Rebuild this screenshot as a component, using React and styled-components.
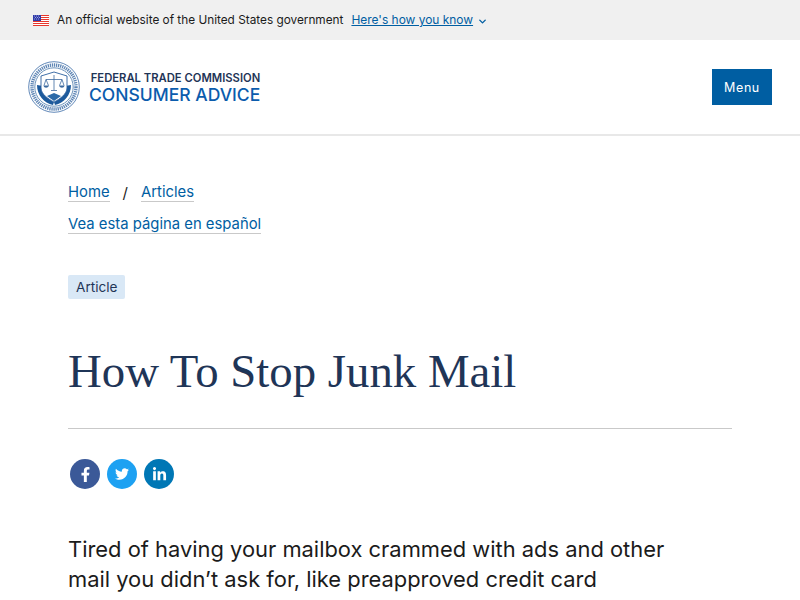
import styled, { createGlobalStyle } from "styled-components";
import { FaFacebookF, FaTwitter, FaLinkedinIn } from "react-icons/fa";
import { FiChevronDown } from "react-icons/fi";

const GlobalStyle = createGlobalStyle`
  html, body {
    margin: 0;
    height: 600px;
    overflow: hidden;
    background: #fff;
    font-family: Inter, "Liberation Sans", sans-serif;
    color: #1b1b1b;
  }
  * { box-sizing: border-box; }
`;

function Flag() {
  const stripes = [0, 2, 4, 6, 8, 10];
  return (
    <svg width="16" height="11" viewBox="0 0 16 11">
      <rect width="16" height="11" fill="#fff" />
      {stripes.map(y => <rect key={y} y={y} width="16" height="1" fill="#e8372c" />)}
      <rect width="8" height="6" fill="#2f3aa8" />
      <path d="M1 1h1M3 1h1M5 1h1M2 2.500h1M4 2.500h1M6 2.500h1M1 4h1M3 4h1M5 4h1" stroke="#c9cff0" strokeWidth="0.7" />
    </svg>
  );
}

function Seal() {
  return (
    <svg width="52" height="52" viewBox="0 0 52 52">
      <circle cx="26" cy="26" r="25.300" fill="#fff" stroke="#4f7bb0" strokeWidth="0.9" />
      <circle cx="26" cy="26" r="22" fill="none" stroke="#5f86b5" strokeWidth="3.400" strokeDasharray="1.300 0.800" />
      <circle cx="26" cy="26" r="19.200" fill="#fff" stroke="#2f659f" strokeWidth="0.7" />
      <path d="M9 24 C9 34 16 42 25 44 L26 41 C20 38 16 33 15 25 Z" fill="#1d5a9c" />
      <path d="M43 24 C43 34 36 42 27 44 L26 41 C32 38 36 33 37 25 Z" fill="#1d5a9c" />
      <path d="M13 15 L26 11 L39 15 V27 C39 33 32 38 26 41 C20 38 13 33 13 27 Z" fill="#fff" stroke="#2a5f9e" strokeWidth="0.9" />
      <path d="M19 35 L26 40 L33 35 L26 32 Z" fill="#2c6aa8" />
      <path d="M26 14 V29 M23 29.500 H29 M18 18.500 H34 M18 18.500 L16 24.500 M18 18.500 L20.500 24.500 M34 18.500 L31.500 24.500 M34 18.500 L36 24.500" stroke="#3d6a9f" strokeWidth="0.8" fill="none" />
      <path d="M15.500 24.500 C16 27.500 20 27.500 21 24.500 Z M31 24.500 C32 27.500 36 27.500 36.500 24.500 Z" fill="#3d6a9f" />
    </svg>
  );
}

export default function App() {
  return (
    <>
      <GlobalStyle />
      <GovBanner>
        <Flag />
        <GovText>An official website of the United States government</GovText>
        <GovLink>Here's how you know</GovLink>
        <FiChevronDown size={11} color="#005ea2" strokeWidth={3} />
      </GovBanner>

      <SiteHeader>
        <Brand>
          <Seal />
          <BrandText>
            <Agency>FEDERAL TRADE COMMISSION</Agency>
            <SiteName>CONSUMER ADVICE</SiteName>
          </BrandText>
        </Brand>
        <MenuButton>Menu</MenuButton>
      </SiteHeader>

      <Main>
        <Crumbs>
          <TextLink>Home</TextLink>
          <Slash>/</Slash>
          <TextLink>Articles</TextLink>
        </Crumbs>
        <LangRow>
          <TextLink>Vea esta página en español</TextLink>
        </LangRow>
        <Tag>Article</Tag>
        <Title>How To Stop Junk Mail</Title>
        <Rule />
        <Share>
          <ShareIcon $bg="#3b5998"><FaFacebookF size={15} /></ShareIcon>
          <ShareIcon $bg="#1da1f2"><FaTwitter size={14} /></ShareIcon>
          <ShareIcon $bg="#0077b5"><FaLinkedinIn size={15} /></ShareIcon>
        </Share>
        <Lead>
          Tired of having your mailbox crammed with ads and other mail you didn’t ask for, like preapproved credit card
        </Lead>
      </Main>
    </>
  );
}

const GovBanner = styled.div`
  height: 40px;
  background: #f0f0f0;
  display: flex;
  align-items: center;
  padding-left: 33px;
  font-size: 11.800px;
  line-height: 16px;
  svg:last-child { margin-left: 4px; margin-top: 2px; }
`;
const GovText = styled.span`
  margin-left: 8px;
  color: #1b1b1b;
`;
const GovLink = styled.a`
  margin-left: 8px;
  font-size: 11.950px;
  color: #005ea2;
  text-decoration: underline;
`;
const SiteHeader = styled.header`
  height: 96px;
  display: flex;
  align-items: center;
  justify-content: space-between;
  padding: 0 28px;
  border-bottom: 2px solid #e8e8e8;
`;
const Brand = styled.div`
  display: flex;
  align-items: center;
  gap: 9px;
`;
const BrandText = styled.div`
  display: flex;
  flex-direction: column;
  align-items: flex-end;
  padding-top: 1px;
`;
const Agency = styled.div`
  font-size: 11.250px;
  line-height: 14px;
  font-weight: 600;
  color: #1f3557;
  white-space: nowrap;
`;
const SiteName = styled.div`
  font-size: 17.500px;
  line-height: 20px;
  font-weight: 500;
  color: #0b5cad;
  white-space: nowrap;
`;
const MenuButton = styled.button`
  width: 60px;
  height: 36px;
  border: none;
  background: #005ea2;
  color: #fff;
  font: 400 12.500px Inter, sans-serif;
  letter-spacing: 0.6px;
`;
const Main = styled.main`
  padding: 44px 68px 0;
`;
const Crumbs = styled.div`
  display: flex;
  align-items: center;
  height: 24px;
`;
const TextLink = styled.a`
  color: #005ea2;
  font-size: 14.850px;
  line-height: 18px;
  border-bottom: 1px solid #c9c9c9;
  white-space: nowrap;
`;
const Slash = styled.span`
  margin: 0 13px;
  font-size: 15px;
`;
const LangRow = styled.div`
  display: flex;
  height: 24px;
  margin-top: 8px;
  align-items: center;
`;
const Tag = styled.span`
  display: inline-block;
  margin-top: 39px;
  padding: 0 8px;
  height: 24px;
  line-height: 24px;
  font-size: 13.600px;
  color: #1f3557;
  background: #d9e8f6;
  border-radius: 2px;
`;
const Title = styled.h1`
  margin: 42px 0 0;
  font-family: "Liberation Serif", serif;
  font-weight: 400;
  font-size: 46.800px;
  line-height: 60px;
  color: #1f3557;
  white-space: nowrap;
`;
const Rule = styled.hr`
  margin: 27px 0 0;
  border: none;
  border-top: 1px solid #c9c9c9;
`;
const Share = styled.div`
  display: flex;
  gap: 7px;
  margin: 30px 0 0 2px;
`;
const ShareIcon = styled.span`
  width: 30px;
  height: 30px;
  border-radius: 50%;
  background: ${props => props.$bg};
  color: #fff;
  display: flex;
  align-items: center;
  justify-content: center;
`;
const Lead = styled.p`
  margin: 45px 0 0;
  max-width: 610px;
  font-size: 21.900px;
  line-height: 30px;
  color: #1b1b1b;
`;
